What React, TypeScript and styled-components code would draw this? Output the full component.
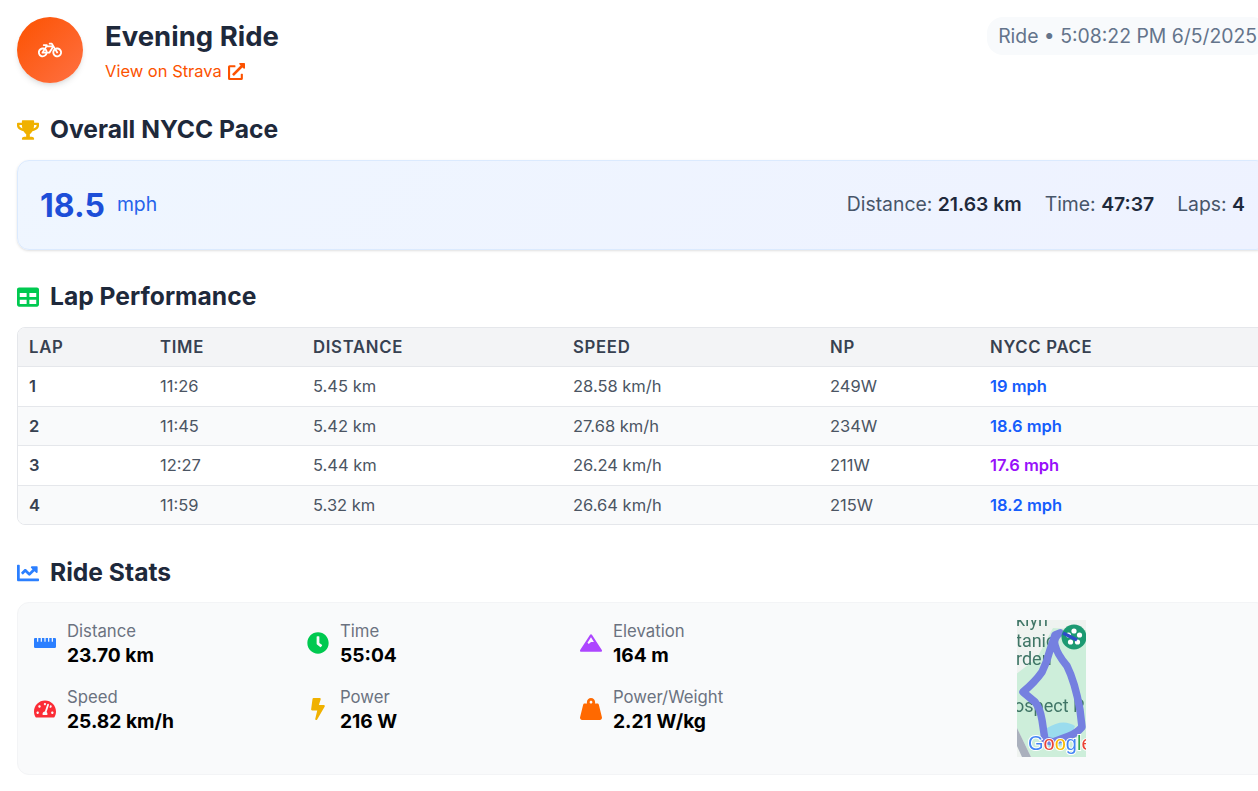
import styled, { createGlobalStyle } from "styled-components";
import {
  FaBicycle,
  FaBolt,
  FaChartLine,
  FaClock,
  FaExternalLinkAlt,
  FaMountain,
  FaRulerHorizontal,
  FaTable,
  FaTachometerAlt,
  FaTrophy,
  FaWeightHanging,
} from "react-icons/fa";

const GlobalStyle = createGlobalStyle`
  html, body {
    margin: 0;
    height: 100%;
    overflow: hidden;
    background: #fff;
    font-family: Inter, "Noto Sans", sans-serif;
    color: #1e293b;
  }
`;

const Page = styled.div`
  width: 1251px;
  padding: 17px 0 0 17px;
`;

const Header = styled.header`
  display: flex;
  justify-content: space-between;
  align-items: flex-start;
  margin-bottom: 32px;
`;

const HeaderLeft = styled.div`
  display: flex;
  align-items: flex-start;
  gap: 22px;
`;

const Avatar = styled.div`
  width: 66px;
  height: 66px;
  border-radius: 50%;
  background: linear-gradient(135deg, #fc5200, #ff7043);
  box-shadow: 0 4px 6px -1px rgba(0, 0, 0, 0.1), 0 2px 4px -2px rgba(0, 0, 0, 0.1);
  display: flex;
  align-items: center;
  justify-content: center;
  color: #fff;
  font-size: 24px;
`;

const TitleBlock = styled.div`
  padding-top: 1px;
`;

const Title = styled.h1`
  margin: 0 0 6px;
  font-size: 27.5px;
  line-height: 36px;
  font-weight: 700;
  color: #1e293b;
`;

const StravaLink = styled.a`
  display: flex;
  align-items: center;
  gap: 6px;
  font-size: 16.5px;
  line-height: 23px;
  color: #fc5200;
  text-decoration: none;
`;

const Pill = styled.div`
  padding: 0 11px;
  height: 38px;
  display: flex;
  align-items: center;
  border-radius: 16px;
  background: #f8fafc;
  color: #64748b;
  font-size: 19.36px;
  white-space: nowrap;
`;

const SectionTitle = styled.h2`
  display: flex;
  align-items: center;
  gap: 11px;
  margin: 0 0 16px;
  font-size: 24.64px;
  line-height: 29px;
  font-weight: 700;
  color: #1e293b;
`;

const StatsTitle = styled(SectionTitle)`
  margin-bottom: 15px;
`;

const IconSlot = styled.span<{ $color: string }>`
  display: inline-flex;
  width: 22px;
  justify-content: center;
  color: ${(p) => p.$color};
  font-size: 22px;
  flex: none;
`;

const PaceCard = styled.section`
  box-sizing: border-box;
  height: 90px;
  margin-bottom: 32px;
  padding: 0 22px;
  display: flex;
  align-items: center;
  justify-content: space-between;
  background: linear-gradient(135deg, #eff6ff, #eef2ff);
  border: 1px solid #dbeafe;
  border-radius: 12px;
  box-shadow: 0 1px 3px rgba(0, 0, 0, 0.1), 0 1px 2px -1px rgba(0, 0, 0, 0.1);
`;

const PaceValue = styled.div`
  display: flex;
  align-items: center;
  gap: 12px;
  color: #1d4ed8;
`;

const PaceNumber = styled.span`
  font-size: 32px;
  font-weight: 700;
`;

const PaceUnit = styled.span`
  padding-bottom: 2px;
  font-size: 19.36px;
  color: #2563eb;
`;

const PaceFacts = styled.div`
  display: flex;
  gap: 23px;
  padding-bottom: 2px;
  font-size: 19.36px;
  color: #475569;
`;

const Fact = styled.span`
  b {
    font-weight: 600;
    color: #1e293b;
  }
`;

const TableWrap = styled.div`
  border: 1px solid #e5e7eb;
  border-radius: 8px;
  overflow: hidden;
  margin-bottom: 33px;
`;

const LapTable = styled.table`
  width: 100%;
  border-collapse: collapse;
  table-layout: fixed;
  font-size: 16.5px;
`;

const Th = styled.th`
  height: 38px;
  padding: 0 11px;
  text-align: left;
  background: #f3f4f6;
  border-bottom: 1px solid #e5e7eb;
  color: #374151;
  font-size: 16.72px;
  font-weight: 600;
  letter-spacing: 0.7px;
`;

const Td = styled.td`
  height: 39.5px;
  box-sizing: border-box;
  padding: 0 11px;
  color: #4b5563;
`;

const Row = styled.tr`
  &:nth-child(even) {
    background: #f9fafb;
  }
  &:not(:last-child) td {
    border-bottom: 1px solid #e5e7eb;
  }
  &:last-child td {
    height: 39px;
  }
`;

const LapCell = styled(Td)`
  color: #374151;
  font-weight: 600;
`;

const PaceCell = styled(Td)<{ $slow?: boolean }>`
  color: ${(p) => (p.$slow ? "#9810fa" : "#155dfc")};
  font-weight: 600;
`;

const StatsCard = styled.section`
  box-sizing: border-box;
  height: 173px;
  padding: 15px 16px;
  display: grid;
  grid-template-columns: 818px 1fr;
  background: #f9fafb;
  border: 1px solid #f3f4f6;
  border-radius: 12px;
`;

const StatsGrid = styled.div`
  display: grid;
  grid-template-columns: repeat(3, 273px);
  grid-auto-rows: 66px;
`;

const Stat = styled.div`
  display: flex;
  align-items: center;
  gap: 11px;
  height: 50px;
`;

const StatLabel = styled.div`
  font-size: 16.72px;
  line-height: 24px;
  color: #6b7280;
`;

const StatValue = styled.div`
  font-size: 19.2px;
  line-height: 24px;
  font-weight: 700;
  color: #000;
`;

const MapFrame = styled.div`
  display: flex;
  justify-content: center;
  padding-top: 2px;
`;

const laps = [
  { lap: 1, time: "11:26", distance: "5.45 km", speed: "28.58 km/h", np: "249W", pace: "19 mph" },
  { lap: 2, time: "11:45", distance: "5.42 km", speed: "27.68 km/h", np: "234W", pace: "18.6 mph" },
  { lap: 3, time: "12:27", distance: "5.44 km", speed: "26.24 km/h", np: "211W", pace: "17.6 mph", slow: true },
  { lap: 4, time: "11:59", distance: "5.32 km", speed: "26.64 km/h", np: "215W", pace: "18.2 mph" },
];

const stats = [
  { label: "Distance", value: "23.70 km", color: "#2b7fff", icon: <FaRulerHorizontal /> },
  { label: "Time", value: "55:04", color: "#00c950", icon: <FaClock /> },
  { label: "Elevation", value: "164 m", color: "#ad46ff", icon: <FaMountain /> },
  { label: "Speed", value: "25.82 km/h", color: "#fb2c36", icon: <FaTachometerAlt /> },
  { label: "Power", value: "216 W", color: "#f0b100", icon: <FaBolt /> },
  { label: "Power/Weight", value: "2.21 W/kg", color: "#ff6900", icon: <FaWeightHanging /> },
];

const RouteMap = () => (
  <svg width="69" height="137" viewBox="0 0 69 137" style={{ display: "block" }}>
    <defs>
      <filter id="soft" x="-5%" y="-5%" width="110%" height="110%">
        <feGaussianBlur stdDeviation="0.45" />
      </filter>
      <clipPath id="mapClip">
        <rect width="69" height="137" />
      </clipPath>
    </defs>
    <g clipPath="url(#mapClip)">
      <g filter="url(#soft)">
        <rect width="69" height="137" fill="#eff3f0" />
        <path d="M-2 55L20 38L36 8L69 10V137H14L0 108Z" fill="#cdeeda" />
        <path d="M30 108Q46 98 58 106L52 122L32 130Z" fill="#9adcee" />
        <path d="M0 108L14 137H5L0 126Z" fill="#aab0bd" />
        <g fontFamily="Roboto, sans-serif" fontSize="18" fill="#3f7566">
          <text x="-1" y="6">klyn</text>
          <text x="-1" y="27">tanic</text>
          <text x="-1" y="45">rden</text>
          <text x="-3" y="92">ospect P</text>
        </g>
        <path
          d="M43 13Q36 18 38 25Q40 34 50 46Q58 62 63 90L65 107Q60 113 52 116L36 122L28 120L25 100Q23 88 18 82L6 72Q18 62 25 52Q30 42 33 30L38 15Z"
          fill="none"
          stroke="#7480e0"
          strokeWidth="7.5"
          strokeLinejoin="round"
        />
        <circle cx="57" cy="17" r="12.5" fill="#1f9a72" />
        <g fill="#fff">
          <circle cx="57" cy="11" r="2.6" />
          <circle cx="51.5" cy="15" r="2.6" />
          <circle cx="62.5" cy="15" r="2.6" />
          <circle cx="53.5" cy="22" r="2.6" />
          <circle cx="60.5" cy="22" r="2.6" />
        </g>
        <path d="M46 13L60 20" stroke="#2f4bc8" strokeWidth="3.5" />
        <text
          x="11"
          y="130"
          fontFamily="'Liberation Sans', sans-serif"
          fontSize="20"
          stroke="#fff"
          strokeWidth="2"
          paintOrder="stroke"
        >
          <tspan fill="#4285f4">G</tspan>
          <tspan fill="#ea4335">o</tspan>
          <tspan fill="#fbbc05">o</tspan>
          <tspan fill="#4285f4">g</tspan>
          <tspan fill="#34a853">l</tspan>
          <tspan fill="#ea4335">e</tspan>
        </text>
      </g>
    </g>
  </svg>
);

export default function App() {
  return (
    <Page>
      <GlobalStyle />
      <Header>
        <HeaderLeft>
          <Avatar>
            <FaBicycle />
          </Avatar>
          <TitleBlock>
            <Title>Evening Ride</Title>
            <StravaLink href="#">
              View on Strava <FaExternalLinkAlt size={17} />
            </StravaLink>
          </TitleBlock>
        </HeaderLeft>
        <Pill>Ride • 5:08:22 PM 6/5/2025</Pill>
      </Header>

      <SectionTitle>
        <IconSlot $color="#f0b100">
          <FaTrophy />
        </IconSlot>
        Overall NYCC Pace
      </SectionTitle>
      <PaceCard>
        <PaceValue>
          <PaceNumber>18.5</PaceNumber>
          <PaceUnit>mph</PaceUnit>
        </PaceValue>
        <PaceFacts>
          <Fact>
            Distance: <b>21.63 km</b>
          </Fact>
          <Fact>
            Time: <b>47:37</b>
          </Fact>
          <Fact>
            Laps: <b>4</b>
          </Fact>
        </PaceFacts>
      </PaceCard>

      <SectionTitle>
        <IconSlot $color="#00c950">
          <FaTable />
        </IconSlot>
        Lap Performance
      </SectionTitle>
      <TableWrap>
        <LapTable>
          <colgroup>
            <col width="131" />
            <col width="153" />
            <col width="260" />
            <col width="257" />
            <col width="160" />
            <col />
          </colgroup>
          <thead>
            <tr>
              <Th>LAP</Th>
              <Th>TIME</Th>
              <Th>DISTANCE</Th>
              <Th>SPEED</Th>
              <Th>NP</Th>
              <Th>NYCC PACE</Th>
            </tr>
          </thead>
          <tbody>
            {laps.map((l) => (
              <Row key={l.lap}>
                <LapCell>{l.lap}</LapCell>
                <Td>{l.time}</Td>
                <Td>{l.distance}</Td>
                <Td>{l.speed}</Td>
                <Td>{l.np}</Td>
                <PaceCell $slow={l.slow}>{l.pace}</PaceCell>
              </Row>
            ))}
          </tbody>
        </LapTable>
      </TableWrap>

      <StatsTitle>
        <IconSlot $color="#2b7fff">
          <FaChartLine />
        </IconSlot>
        Ride Stats
      </StatsTitle>
      <StatsCard>
        <StatsGrid>
          {stats.map((s) => (
            <Stat key={s.label}>
              <IconSlot $color={s.color}>{s.icon}</IconSlot>
              <div>
                <StatLabel>{s.label}</StatLabel>
                <StatValue>{s.value}</StatValue>
              </div>
            </Stat>
          ))}
        </StatsGrid>
        <MapFrame>
          <RouteMap />
        </MapFrame>
      </StatsCard>
    </Page>
  );
}
